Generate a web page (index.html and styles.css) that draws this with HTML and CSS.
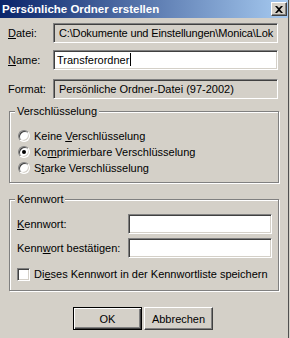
FILE: index.html
```html
<!DOCTYPE html>
<html lang="de">
<head>
    <meta charset="UTF-8">
    <title>Persönliche Ordner erstellen</title>
    <link rel="stylesheet" href="styles.css">
</head>
<body>
    <div class="window">
        <div class="titlebar">
            <span class="title">Persönliche Ordner erstellen</span>
            <span class="close">
                <svg width="8" height="7" viewBox="0 0 8 7"><path d="M0 0h2l2 2 2-2h2L5 3.5 8 7H6L4 5 2 7H0l3-3.5z" fill="#000"/></svg>
            </span>
        </div>

        <div class="content">
            <div class="row">
                <span class="label"><u>D</u>atei:</span>
                <div class="field readonly path">C:\Dokumente und Einstellungen\Monica\Lok</div>
            </div>
            <div class="row row-name">
                <span class="label"><u>N</u>ame:</span>
                <div class="field edit">Transferordner<span class="caret"></span></div>
            </div>
            <div class="row row-format">
                <span class="label">Format:</span>
                <div class="field readonly">Persönliche Ordner-Datei (97-2002)</div>
            </div>

            <div class="group group-enc">
                <div class="legend">Verschlüsselung</div>
                <div class="options">
                    <div class="option"><span class="radio"></span><span>Keine <u>V</u>erschlüsselung</span></div>
                    <div class="option"><span class="radio checked"></span><span>Ko<u>m</u>primierbare Verschlüsselung</span></div>
                    <div class="option"><span class="radio"></span><span>S<u>t</u>arke Verschlüsselung</span></div>
                </div>
            </div>

            <div class="group group-pw">
                <div class="legend">Kennwort</div>
                <div class="pwrow">
                    <span class="label"><u>K</u>ennwort:</span>
                    <div class="field edit"></div>
                </div>
                <div class="pwrow pwrow-2">
                    <span class="label">Kenn<u>w</u>ort bestätigen:</span>
                    <div class="field edit"></div>
                </div>
                <div class="option check-row"><span class="checkbox"></span><span>Di<u>e</u>ses Kennwort in der Kennwortliste speichern</span></div>
            </div>

            <div class="buttons">
                <button class="btn default">OK</button>
                <button class="btn">Abbrechen</button>
            </div>
        </div>
    </div>
</body>
</html>
```

FILE: styles.css
```css
* { box-sizing: border-box; }
html, body { margin: 0; }
body { background: #d4d0c8; font-family: "Liberation Sans", Arial, sans-serif; font-size: 11px; color: #000; }

.window { width: 289px; height: 338px; background: #d4d0c8; border-right: 1px solid #505050; overflow: hidden; }

.titlebar { height: 18px; display: flex; align-items: center; justify-content: space-between; padding: 0 1px 0 2px; background: linear-gradient(to right, #0a246a, #a6caf0); color: #fff; font-weight: bold; font-size: 11.5px; }
.close { width: 16px; height: 14px; display: flex; align-items: center; justify-content: center; background: #d4d0c8; border: 1px solid; border-color: #fff #404040 #404040 #fff; box-shadow: inset -1px -1px #808080; }

.content { padding: 5px 10px 0 8px; }

.row { display: grid; grid-template-columns: 45px 1fr; align-items: center; height: 20px; }
.row-name { margin-top: 7px; }
.row-format { margin-top: 9px; }

.field { height: 20px; border: 1px solid; border-color: #808080 #fff #fff #808080; box-shadow: inset 1px 1px #404040, inset -1px -1px #d4d0c8; background: #fff; line-height: 18px; white-space: nowrap; overflow: hidden; padding: 0 3px; }
.field.readonly { background: #d4d0c8; padding-left: 5px; }
.field.path { letter-spacing: -0.15px; padding-right: 0; }
.caret { display: inline-block; width: 1px; height: 13px; background: #000; vertical-align: -2px; margin-left: 1px; }

.group { margin: 12px -1px 0 1px; border: 1px solid #808080; box-shadow: inset 1px 1px #fff, 1px 1px #fff; }
.legend { display: table; margin: -7px 0 0 5px; padding: 0 2px; background: #d4d0c8; line-height: 13px; }

.options { padding: 10px 0 6px 8px; }
.option { display: flex; align-items: center; height: 16px; }
.radio { flex: none; width: 12px; height: 12px; margin-right: 4px; border-radius: 50%; border: 1px solid; border-color: #808080 #fff #fff #808080; box-shadow: inset 1px 1px #404040, inset -1px -1px #d4d0c8; background: #fff; display: flex; align-items: center; justify-content: center; }
.radio.checked::after { content: ""; width: 4px; height: 4px; border-radius: 50%; background: #000; }

.group-pw { margin-top: 16px; padding: 8px 6px 8px 7px; }
.group-pw .legend { margin-top: -15px; margin-left: -2px; margin-bottom: 8px; }
.pwrow { display: grid; grid-template-columns: 111px 1fr; align-items: center; height: 20px; }
.pwrow-2 { margin-top: 4px; }
.check-row { margin-top: 8px; }
.checkbox { flex: none; width: 13px; height: 13px; margin-right: 4px; border: 1px solid; border-color: #808080 #fff #fff #808080; box-shadow: inset 1px 1px #404040, inset -1px -1px #d4d0c8; background: #fff; }

.buttons { display: flex; justify-content: center; gap: 2px; margin-top: 16px; }
.btn { width: 69px; height: 23px; padding: 0; font: inherit; color: #000; background: #d4d0c8; border: 1px solid; border-color: #fff #404040 #404040 #fff; box-shadow: inset -1px -1px #808080; }
.btn.default { border-color: #000; box-shadow: inset 1px 1px #fff, inset -1px -1px #404040, inset -2px -2px #808080; }
```
